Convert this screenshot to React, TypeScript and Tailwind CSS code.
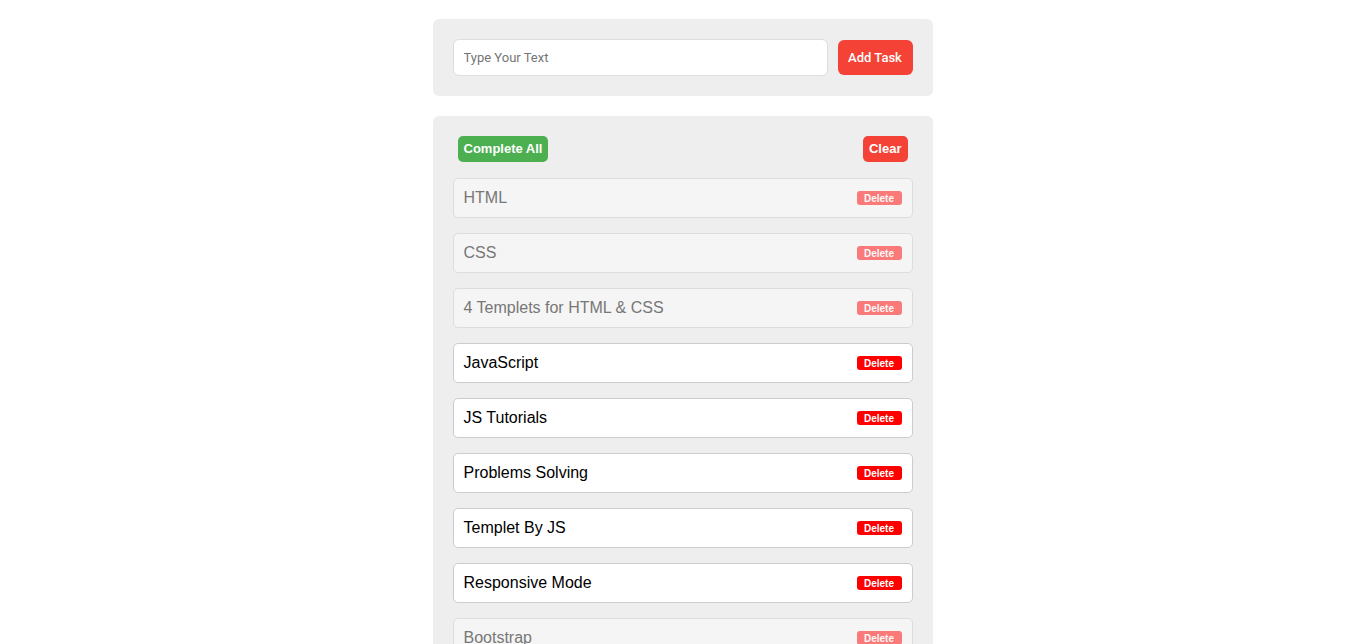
import React from 'react';

const tasks = [
  { title: 'HTML', done: true },
  { title: 'CSS', done: true },
  { title: '4 Templets for HTML & CSS', done: true },
  { title: 'JavaScript', done: false },
  { title: 'JS Tutorials', done: false },
  { title: 'Problems Solving', done: false },
  { title: 'Templet By JS', done: false },
  { title: 'Responsive Mode', done: false },
  { title: 'Bootstrap', done: true },
];

const App = () => {
  return (
    <div className="min-h-screen bg-white font-['Liberation_Sans',Arial,sans-serif]">
      <div className="w-[500px] mx-auto pt-[19px]">
        {/* Form */}
        <div className="bg-[#eeeeee] rounded-[6px] p-5 flex items-center gap-[10px]">
          <input
            type="text"
            placeholder="Type Your Text"
            className="flex-1 h-[37px] bg-white border border-[#dddddd] rounded-[6px] px-[10px] text-[13px] font-['Roboto',sans-serif] placeholder:text-[#757575] outline-none"
          />
          <button className="h-[35px] w-[75px] bg-[#f44336] text-white rounded-[6px] text-[13px] font-['Roboto',sans-serif] font-medium">
            Add Task
          </button>
        </div>

        {/* Tasks */}
        <div className="bg-[#eeeeee] rounded-[6px] p-5 mt-5">
          <div className="flex items-center justify-between px-[5px] mb-4">
            <button className="h-[26px] px-[6px] bg-[#4caf50] text-white rounded-[5px] text-[13px] font-bold">
              Complete All
            </button>
            <button className="h-[26px] px-[6px] bg-[#f44336] text-white rounded-[5px] text-[13px] font-bold">
              Clear
            </button>
          </div>
          <div className="flex flex-col gap-[15px]">
            {tasks.map((task, index) => (
              <div
                key={index}
                className={`h-[40px] flex items-center justify-between px-[10px] border rounded-[5px] ${
                  task.done ? 'bg-[#f5f5f5] border-[#dddddd] text-[#777777]' : 'bg-white border-[#cccccc] text-black'
                }`}
              >
                <span className="text-[16px]">{task.title}</span>
                <span
                  className={`h-[14px] w-[45px] flex items-center justify-center rounded-[3px] bg-[#ff0000] text-white text-[10px] font-bold ${
                    task.done ? 'opacity-50' : ''
                  }`}
                >
                  Delete
                </span>
              </div>
            ))}
          </div>
        </div>
      </div>
    </div>
  );
};

export default App;
